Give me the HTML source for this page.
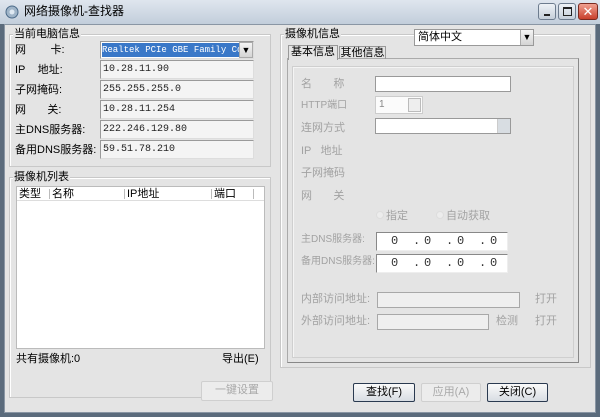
<!DOCTYPE html>
<html><head><meta charset="utf-8"><style>
*{margin:0;padding:0;box-sizing:border-box}
body{width:600px;height:417px;overflow:hidden;background:#5b6b7c;font:11px "Liberation Sans","Noto Sans CJK SC",sans-serif;color:#000;position:relative}
.a{position:absolute}
#title{left:0;top:0;width:600px;height:24px;background:linear-gradient(#dfe6ee,#c2cedb);}
#client{left:4px;top:24px;width:592px;height:389px;background:#e4e4e4;border:1px solid #8a96a4}
.grp{position:absolute;border:1px solid #c8c8c8;box-shadow:1px 1px 0 #fff inset}
.lbl{position:absolute;background:#e4e4e4;padding:0 1px;white-space:nowrap;line-height:14px}
.t{position:absolute;white-space:nowrap;line-height:14px}
.g{color:#a2a2a2}
.f{position:absolute;background:#f4f4f4;border:1px solid #9a9a9a;border-right-color:#ddd;border-bottom-color:#ddd;font-family:"Liberation Mono","Noto Sans CJK SC",monospace;font-size:10px;line-height:17px;padding-left:2px;color:#222;white-space:nowrap;overflow:hidden}
.dis{background:#efefef;border:1px solid #a8a8a8}
.btn{position:absolute;border:1px solid #2a3a50;border-radius:2px;background:linear-gradient(#fafafa,#d8dde3);text-align:center;line-height:16px}
.btnd{position:absolute;border:1px solid #cfcfcf;border-radius:2px;background:#ececec;color:#a8a8a8;text-align:center;line-height:17px}
.wb{position:absolute;top:3px;width:18px;height:17px;border:1px solid #6d7c8e;border-radius:3px;background:linear-gradient(#eef2f6,#c5cfda)}
.ip{position:absolute;background:#fff;border:1px solid #888;border-right-color:#eee;border-bottom-color:#eee;font-family:'Liberation Mono',monospace;font-size:12px;color:#333}
.ip span{position:absolute;top:1px;line-height:15px}
</style></head><body>
<div id="title" class="a"></div>
<svg class="a" style="left:4px;top:4px" width="16" height="16"><circle cx="8" cy="8" r="6" fill="#9fb4c8" stroke="#4b6a88"/><circle cx="8" cy="8" r="2.5" fill="#dfe9f2"/></svg>
<div class="t" style="left:24px;top:4px;font-size:12px">网络摄像机-查找器</div>
<div class="wb" style="left:538px"><div class="a" style="left:5px;top:10px;width:6px;height:2px;background:#222"></div></div>
<div class="wb" style="left:558px"><div class="a" style="left:4px;top:3px;width:9px;height:9px;border:1px solid #222;border-top-width:2px"></div></div>
<div class="wb" style="left:578px;width:20px;background:linear-gradient(#f0a090,#c8402c);border-color:#7a2a20;color:#fff;text-align:center;font-size:13px;line-height:15px">✕</div>
<div id="client" class="a"></div>

<div class="grp" style="left:9px;top:34px;width:262px;height:133px"></div>
<div class="lbl" style="left:13px;top:27px">当前电脑信息</div>
<div class="t" style="left:15px;top:43px">网&nbsp;&nbsp;&nbsp;&nbsp;&nbsp;&nbsp;&nbsp;&nbsp;卡:</div>
<div class="f" style="left:100px;top:41px;width:154px;height:18px;background:#fff;padding:1px"><div style="background:#3a78c8;color:#fff;width:137px;height:14px;line-height:14px;font-size:9px;overflow:hidden;white-space:nowrap">Realtek PCIe GBE Family Con</div></div>
<div class="a" style="left:239px;top:42px;width:14px;height:16px;background:linear-gradient(#f4f4f4,#d4d4d4);border:1px solid #aaa;font-size:9px;text-align:center;line-height:14px">▼</div>
<div class="t" style="left:15px;top:63px">IP&nbsp;&nbsp;&nbsp;&nbsp;地址:</div>
<div class="f" style="left:100px;top:60px;width:154px;height:19px">10.28.11.90</div>
<div class="t" style="left:15px;top:83px">子网掩码:</div>
<div class="f" style="left:100px;top:80px;width:154px;height:19px">255.255.255.0</div>
<div class="t" style="left:15px;top:103px">网&nbsp;&nbsp;&nbsp;&nbsp;&nbsp;&nbsp;&nbsp;关:</div>
<div class="f" style="left:100px;top:100px;width:154px;height:19px">10.28.11.254</div>
<div class="t" style="left:15px;top:123px">主DNS服务器:</div>
<div class="f" style="left:100px;top:120px;width:154px;height:19px">222.246.129.80</div>
<div class="t" style="left:15px;top:143px">备用DNS服务器:</div>
<div class="f" style="left:100px;top:140px;width:154px;height:19px">59.51.78.210</div>

<div class="grp" style="left:9px;top:177px;width:262px;height:221px"></div>
<div class="lbl" style="left:13px;top:170px">摄像机列表</div>
<div class="a" style="left:16px;top:186px;width:249px;height:163px;background:#fff;border:1px solid #bbb"></div>
<div class="a" style="left:17px;top:187px;width:247px;height:14px;border-bottom:1px solid #ddd"></div>
<div class="t" style="left:19px;top:187px">类型</div>
<div class="a" style="left:49px;top:189px;width:1px;height:10px;background:#bbb"></div>
<div class="t" style="left:52px;top:187px">名称</div>
<div class="a" style="left:124px;top:189px;width:1px;height:10px;background:#bbb"></div>
<div class="t" style="left:127px;top:187px">IP地址</div>
<div class="a" style="left:211px;top:189px;width:1px;height:10px;background:#bbb"></div>
<div class="t" style="left:214px;top:187px">端口</div>
<div class="a" style="left:253px;top:189px;width:1px;height:10px;background:#bbb"></div>
<div class="t" style="left:16px;top:352px">共有摄像机:0</div>
<div class="t" style="left:222px;top:352px">导出(E)</div>
<div class="btnd" style="left:201px;top:381px;width:72px;height:20px">一键设置</div>

<div class="grp" style="left:280px;top:34px;width:311px;height:334px"></div>
<div class="lbl" style="left:284px;top:27px">摄像机信息</div>
<div class="a" style="left:414px;top:29px;width:120px;height:17px;background:#fff;border:1px solid #999;line-height:15px;padding-left:3px">简体中文</div>
<div class="a" style="left:520px;top:30px;width:13px;height:15px;background:linear-gradient(#f4f4f4,#d4d4d4);border-left:1px solid #aaa;font-size:9px;text-align:center;line-height:15px">▼</div>
<div class="a" style="left:287px;top:58px;width:292px;height:305px;border:1px solid #aaa;border-right-color:#888;border-bottom-color:#888"></div>
<div class="a" style="left:288px;top:45px;width:50px;height:15px;background:#e4e4e4;border:1px solid #999;border-bottom:none;text-align:center;line-height:13px;white-space:nowrap">基本信息</div>
<div class="a" style="left:339px;top:46px;width:47px;height:13px;border:1px solid #999;border-bottom:none;text-align:center;line-height:12px;white-space:nowrap">其他信息</div>
<div class="a" style="left:292px;top:66px;width:282px;height:292px;border:1px solid #cfcfcf;box-shadow:1px 1px 0 #f4f4f4 inset"></div>

<div class="t g" style="left:301px;top:77px">名&nbsp;&nbsp;&nbsp;&nbsp;&nbsp;&nbsp;&nbsp;称</div>
<div class="a" style="left:375px;top:76px;width:136px;height:16px;background:#fff;border:1px solid #999"></div>
<div class="t g" style="left:301px;top:99px;font-size:10px">HTTP端口</div>
<div class="a" style="left:375px;top:96px;width:48px;height:18px;background:#fbfbfb;border:1px solid #ccc;font-size:10px;color:#888;padding-left:3px;line-height:16px">1</div>
<div class="a" style="left:408px;top:98px;width:13px;height:14px;border:1px solid #bbb;background:#eee"></div>
<div class="t g" style="left:301px;top:121px">连网方式</div>
<div class="a" style="left:375px;top:118px;width:136px;height:16px;background:#fff;border:1px solid #999"></div>
<div class="a" style="left:497px;top:119px;width:13px;height:14px;background:#d8dde2;border-left:1px solid #ccc"></div>
<div class="t g" style="left:301px;top:144px">IP&nbsp;&nbsp;&nbsp;地址</div>
<div class="t g" style="left:301px;top:166px">子网掩码</div>
<div class="t g" style="left:301px;top:189px">网&nbsp;&nbsp;&nbsp;&nbsp;&nbsp;&nbsp;&nbsp;关</div>
<div class="a" style="left:376px;top:211px;width:8px;height:8px;border-radius:50%;background:#ececec;border:1px solid #ddd"></div>
<div class="t g" style="left:386px;top:209px">指定</div>
<div class="a" style="left:436px;top:211px;width:8px;height:8px;border-radius:50%;background:#ececec;border:1px solid #ddd"></div>
<div class="t g" style="left:446px;top:209px">自动获取</div>
<div class="t g" style="left:301px;top:233px;font-size:10px">主DNS服务器:</div>
<div class="ip" style="left:376px;top:232px;width:132px;height:19px"><span style="left:14px">0</span><span style="left:36px">.</span><span style="left:47px">0</span><span style="left:69px">.</span><span style="left:80px">0</span><span style="left:102px">.</span><span style="left:113px">0</span></div>
<div class="t g" style="left:301px;top:255px;font-size:10px">备用DNS服务器:</div>
<div class="ip" style="left:376px;top:254px;width:132px;height:19px"><span style="left:14px">0</span><span style="left:36px">.</span><span style="left:47px">0</span><span style="left:69px">.</span><span style="left:80px">0</span><span style="left:102px">.</span><span style="left:113px">0</span></div>
<div class="t g" style="left:301px;top:292px">内部访问地址:</div>
<div class="a dis" style="left:377px;top:292px;width:143px;height:16px"></div>
<div class="t g" style="left:535px;top:292px">打开</div>
<div class="t g" style="left:301px;top:314px">外部访问地址:</div>
<div class="a dis" style="left:377px;top:314px;width:112px;height:16px"></div>
<div class="t g" style="left:496px;top:314px">检测</div>
<div class="t g" style="left:535px;top:314px">打开</div>

<div class="btn" style="left:353px;top:383px;width:62px;height:19px">查找(F)</div>
<div class="btnd" style="left:421px;top:383px;width:60px;height:19px">应用(A)</div>
<div class="btn" style="left:487px;top:383px;width:61px;height:19px">关闭(C)</div>
</body></html>
